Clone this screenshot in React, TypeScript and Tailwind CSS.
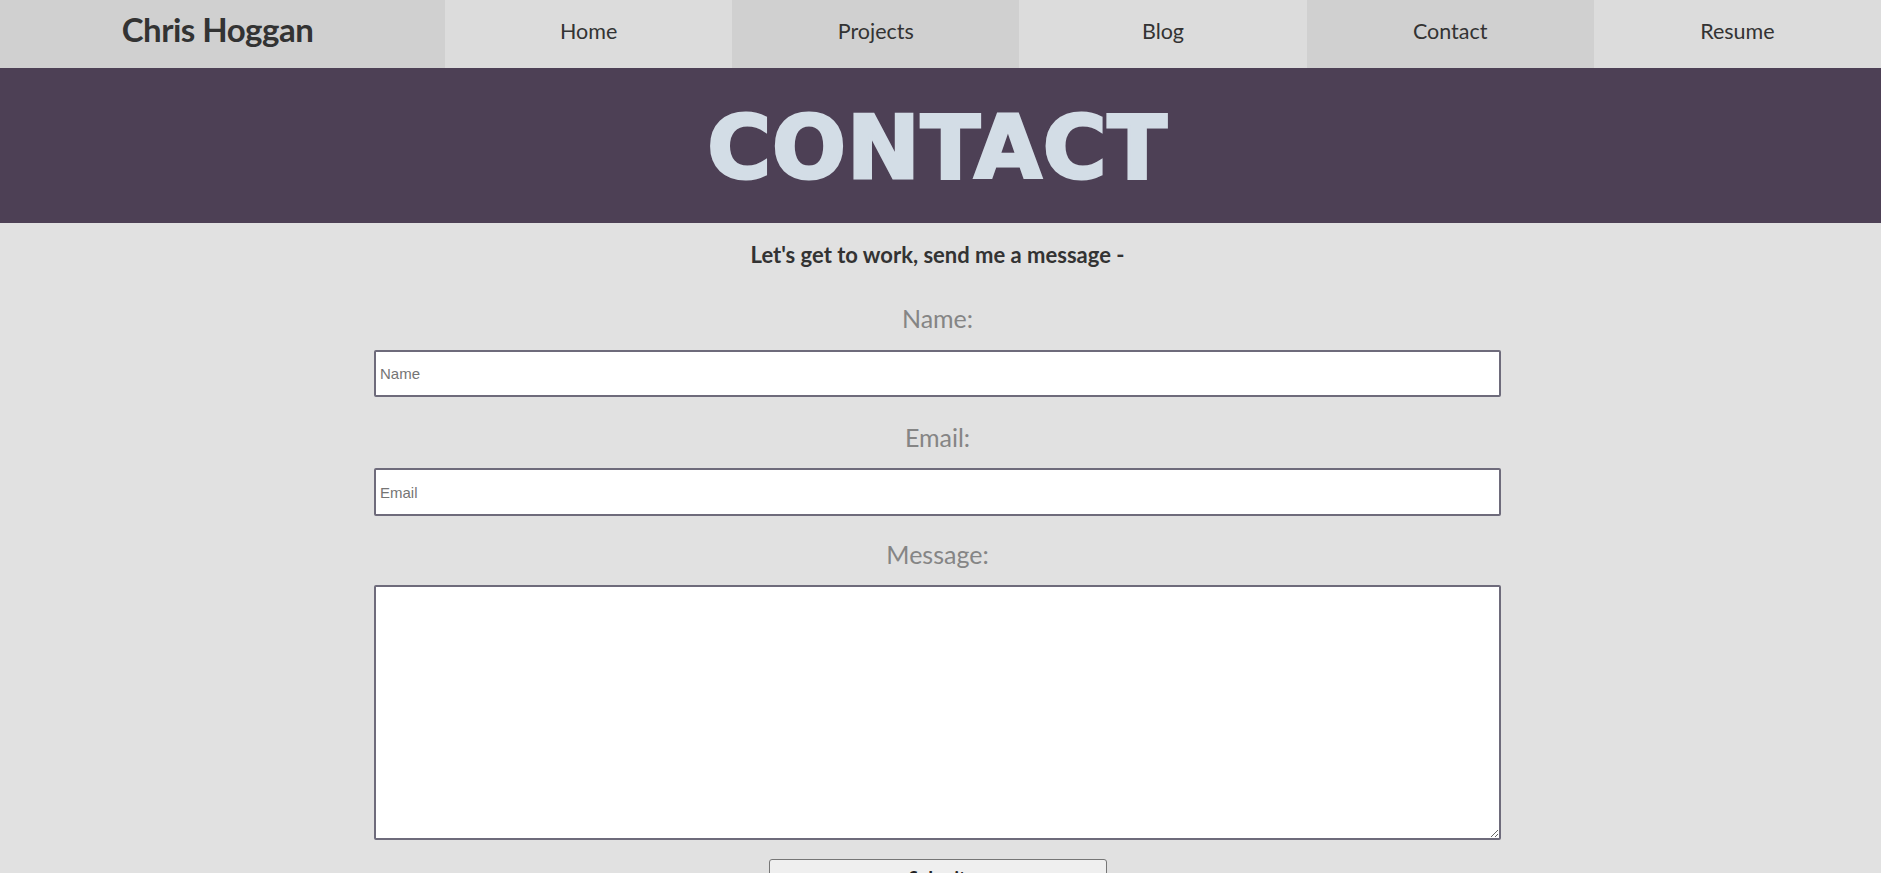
import { useState } from 'react';

const navLinks = [
  { label: 'Home', shade: 'bg-[#dcdcdc]' },
  { label: 'Projects', shade: 'bg-[#d0d0d0]' },
  { label: 'Blog', shade: 'bg-[#dcdcdc]' },
  { label: 'Contact', shade: 'bg-[#d0d0d0]' },
  { label: 'Resume', shade: 'bg-[#dcdcdc]' },
];

export default function App() {
  const [form, setForm] = useState({ name: '', email: '', message: '' });

  return (
    <div className="min-h-screen bg-[#e1e1e1] font-['Lato','Noto_Sans',sans-serif] text-[#333]">
      {/* Top nav */}
      <nav className="flex h-[68px]">
        <div className="flex w-[445px] items-center justify-center bg-[#d0d0d0] pr-[10px] pb-[8px]">
          <span className="text-[33px] font-bold tracking-[-0.5px] text-[#333]">Chris Hoggan</span>
        </div>
        {navLinks.map((link) => (
          <a
            key={link.label}
            href="#"
            className={`flex flex-1 items-center justify-center pb-[6px] text-[21.5px] text-[#333] ${link.shade}`}
          >
            {link.label}
          </a>
        ))}
      </nav>

      {/* Page header */}
      <header className="flex h-[155px] items-center justify-center bg-[#4d4055] pt-[6px] pr-[6px]">
        <h1 className="font-['DejaVu_Sans',sans-serif] text-[87px] font-bold leading-none tracking-[1px] text-[#d3dde6] [-webkit-text-stroke:3px_#d3dde6]">
          CONTACT
        </h1>
      </header>

      {/* Form */}
      <main className="flex flex-col items-center pr-[6px]">
        <p className="mt-[18px] text-[22px] font-bold leading-[28px] text-[#333]">
          Let's get to work, send me a message -
        </p>

        <form className="flex w-[1127px] flex-col items-center" onSubmit={(e) => e.preventDefault()}>
          <label className="mt-[34px] text-[25px] leading-[30px] text-[#858585]">Name:</label>
          <input
            type="text"
            placeholder="Name"
            value={form.name}
            onChange={(e) => setForm({ ...form, name: e.target.value })}
            className="mt-[17px] h-[47px] w-full rounded-[2px] border-2 border-[#6e6b7b] bg-white px-[4px] font-['Liberation_Sans',sans-serif] text-[15px] outline-none placeholder:text-[#757575]"
          />

          <label className="mt-[25px] text-[25px] leading-[30px] text-[#858585]">Email:</label>
          <input
            type="email"
            placeholder="Email"
            value={form.email}
            onChange={(e) => setForm({ ...form, email: e.target.value })}
            className="mt-[16px] h-[48px] w-full rounded-[2px] border-2 border-[#6e6b7b] bg-white px-[4px] font-['Liberation_Sans',sans-serif] text-[15px] outline-none placeholder:text-[#757575]"
          />

          <label className="mt-[23px] text-[25px] leading-[30px] text-[#858585]">Message:</label>
          <textarea
            value={form.message}
            onChange={(e) => setForm({ ...form, message: e.target.value })}
            className="mt-[16px] h-[255px] w-full rounded-[2px] border-2 border-[#6e6b7b] bg-white p-[4px] font-['Liberation_Sans',sans-serif] text-[15px] outline-none"
          />

          <button
            type="submit"
            className="mt-[19px] mb-[20px] h-[36px] w-[338px] rounded-[3px] border border-[#767676] bg-[#efefef] font-['Open_Sans',sans-serif] text-[16px] font-bold text-[#222]"
          >
            Submit
          </button>
        </form>
      </main>
    </div>
  );
}
